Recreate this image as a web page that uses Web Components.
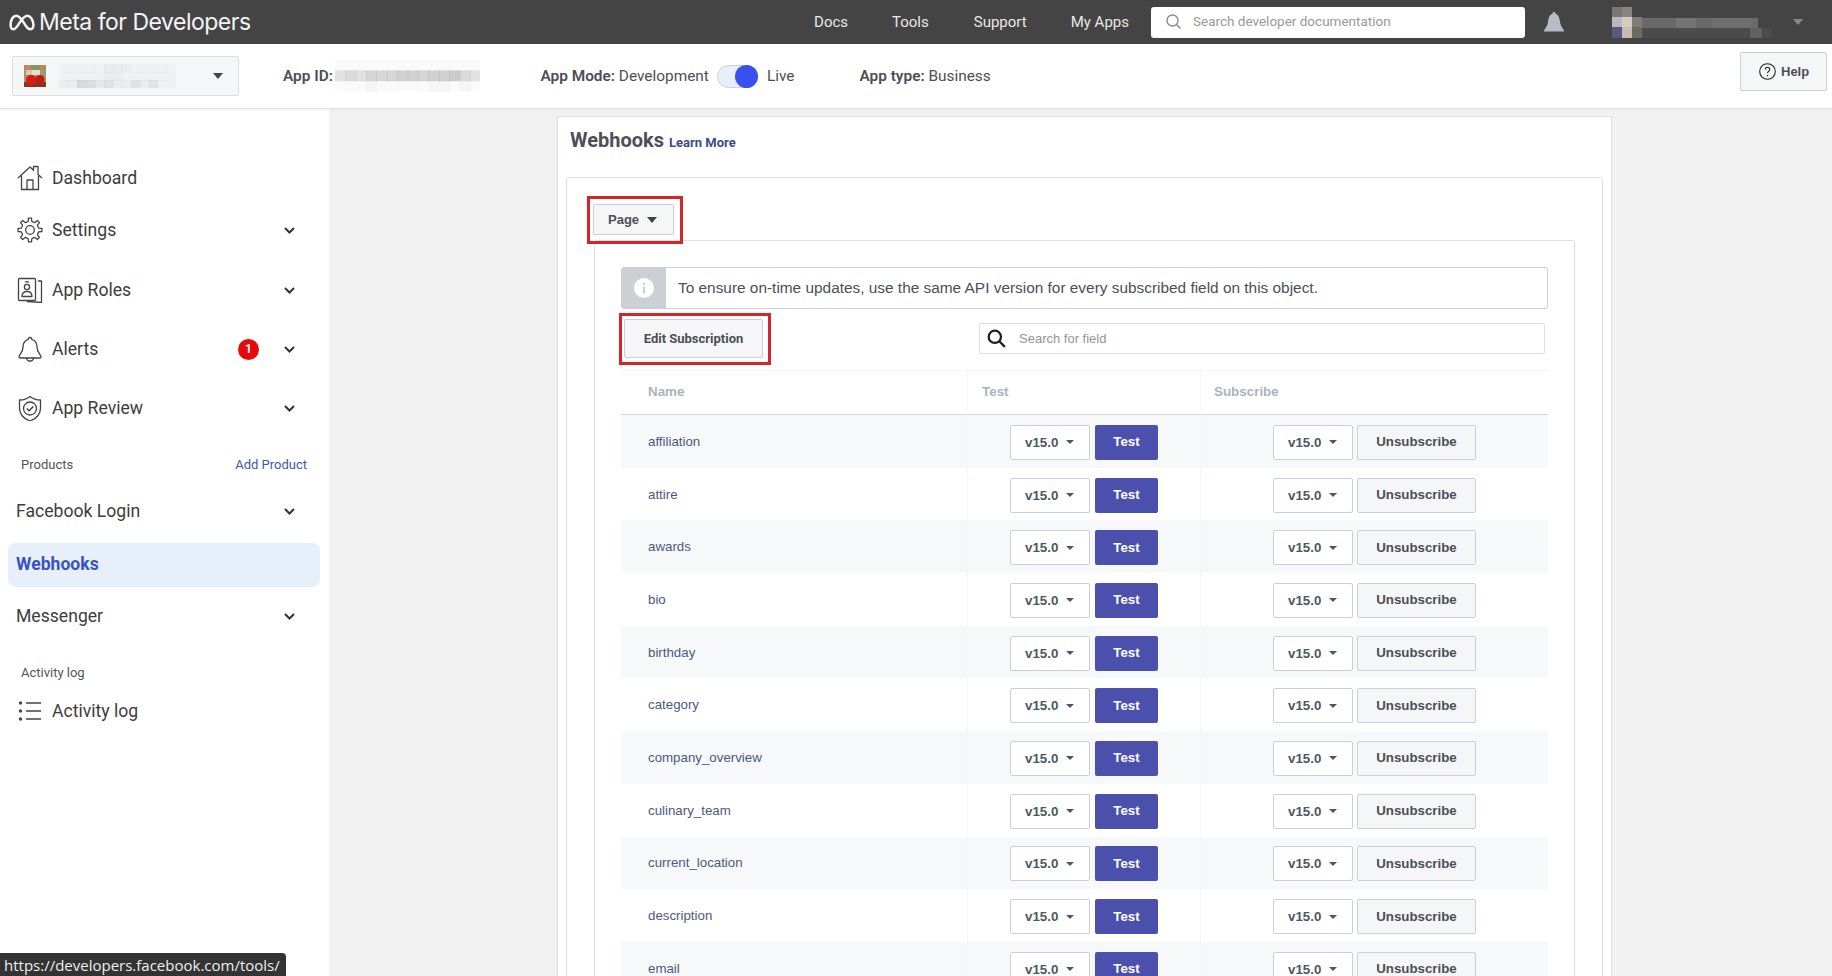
<!DOCTYPE html>
<html lang="en">
<head>
<meta charset="utf-8">
<title>Webhooks - Meta for Developers</title>
<style>
  html, body { margin: 0; height: 976px; overflow: hidden; background: #f1f1f1; }
  body { display: flex; flex-direction: column; font-family: "Roboto", sans-serif; }
  .below { display: flex; flex: 1; min-height: 0; }
</style>
</head>
<body>
<dev-topbar></dev-topbar>
<app-bar></app-bar>
<div class="below">
  <side-nav>
    <nav-item style="--h:43px" icon="home">Dashboard</nav-item>
    <nav-item style="--h:62px" icon="gear" more>Settings</nav-item>
    <nav-item style="--h:57px" icon="roles" more>App Roles</nav-item>
    <nav-item style="--h:62px" icon="bell" more badge="1">Alerts</nav-item>
    <nav-item style="--h:55px" icon="shield" more>App Review</nav-item>
    <nav-section style="--h:58px" action="Add Product">Products</nav-section>
    <nav-item style="--h:35px" more>Facebook Login</nav-item>
    <nav-item style="--h:44px; margin-top:15px" active>Webhooks</nav-item>
    <nav-item style="--h:57px" more>Messenger</nav-item>
    <nav-section style="--h:56px">Activity log</nav-section>
    <nav-item style="--h:22px" icon="list">Activity log</nav-item>
  </side-nav>
  <webhooks-page></webhooks-page>
</div>
<status-tip>https://developers.facebook.com/tools/</status-tip>

<script>
const ICONS = {
  home: `<path d="M1 13 13 2l3.500 3.200V1.500h4.500v8l4 3.500"/><path d="M4.500 10.500V24.500h17V10.500"/><path d="M10 24.500V15h6v9.500"/>`,
  roles: `<rect x="1.500" y="1.500" width="17" height="22" rx="1"/><circle cx="10" cy="10" r="2.600"/><path d="M5 19.500c0-3.500 2-5 5-5s5 1.500 5 5zM8 4.800h4"/><path d="M21 4h3.500v21.500L10 24.500"/>`,
  bell: `<path d="M13 1.500c1 0 1.800.8 1.800 2 3.500 1 5.200 4 5.200 7.500 0 6 4 7.500 4 10 0 .8-.5 1-1.200 1H3.200c-.7 0-1.200-.2-1.200-1 0-2.500 4-4 4-10 0-3.500 1.700-6.500 5.200-7.500 0-1.200.8-2 1.800-2z"/><path d="M9.500 21.500c0 2.200 1.500 3.500 3.500 3.500s3.500-1.300 3.500-3.500"/>`,
  shield: `<path d="M13 1.500c3 2.500 6 3.500 10.500 3.500v8c0 6.500-4 10.500-10.500 13-6.500-2.500-10.500-6.500-10.500-13V5c4.500 0 7.500-1 10.500-3.500z"/><circle cx="13" cy="13.500" r="6.500"/><path d="m9.800 13.500 2.300 2.300 4.200-4.300" stroke-width="1.500"/>`,
  list: `<circle cx="3.500" cy="5" r="1.700" fill="#444" stroke="none"/><circle cx="3.500" cy="13" r="1.700" fill="#444" stroke="none"/><circle cx="3.500" cy="21" r="1.700" fill="#444" stroke="none"/><path d="M9 5h15M9 13h15M9 21h15"/>`,
};

function gearIcon() {
  // eight teeth, drawn round the centre of a 26 box
  let d = "";
  const teeth = 8;
  for (let i = 0; i < teeth; i++) {
    const a = (i / teeth) * Math.PI * 2;
    const step = (Math.PI * 2) / teeth;
    const pts = [
      [8.6, a - step * 0.5],
      [8.9, a - step * 0.26],
      [12, a - step * 0.16],
      [12, a + step * 0.16],
      [8.9, a + step * 0.26],
    ];
    pts.forEach(([r, t], k) => {
      const x = (13 + r * Math.cos(t)).toFixed(2);
      const y = (13 + r * Math.sin(t)).toFixed(2);
      d += (i === 0 && k === 0 ? "M" : "L") + x + " " + y;
    });
  }
  return `<path d="${d}Z"/><circle cx="13" cy="13" r="4.300"/>`;
}

class DevTopbar extends HTMLElement {
  constructor() {
    super();
    this.attachShadow({ mode: "open" });
  }

  connectedCallback() {
    this.shadowRoot.innerHTML = `
      <style>
        :host {
          display: flex;
          align-items: center;
          flex: none;
          height: 44px;
          background: #444;
          color: #e8e8e8;
          font: 15px "Roboto", sans-serif;
        }
        .logo {
          display: flex;
          align-items: center;
          margin-left: 8px;
          color: #f4f4f4;
        }
        .logo svg { display: block; margin-right: 4px; }
        .logo span {
          font: 400 23px "Inter", sans-serif;
          letter-spacing: -0.5px;
          white-space: nowrap;
        }
        nav {
          display: flex;
          margin-left: auto;
          gap: 0;
        }
        nav a { color: inherit; text-decoration: none; white-space: nowrap; }
        .search {
          display: flex;
          align-items: center;
          box-sizing: border-box;
          width: 374px;
          height: 31px;
          margin-left: 22px;
          padding: 0 0 2px 15px;
          background: #fff;
          border-radius: 3px;
          color: #999;
          font-size: 13.5px;
        }
        .search svg { margin-right: 12px; }
        .bell { margin-left: 19px; display: block; }
        .user { margin-left: 48px; display: block; }
        .caret {
          width: 0;
          height: 0;
          margin: 0 29px 0 20px;
          border: 5px solid transparent;
          border-top: 6px solid #8a8a8a;
          border-bottom: 0;
        }
      </style>
      <div class="logo">
        <svg width="27" height="19" viewBox="0 0 26 16" fill="none" stroke="#f4f4f4" stroke-width="2.400">
          <path d="M2.500 10.500C2.500 5 5 1.500 8 1.500c3.500 0 6.500 5.500 9 9.500 1.500 2.500 3 3.500 4.500 3.500 2 0 3-2 3-4 0-5-3-9-6-9-3.500 0-7 6-9.500 10-1.500 2.200-2.500 3-4 3-1.500 0-2.500-1.500-2.500-4z"/>
        </svg>
        <span>Meta for Developers</span>
      </div>
      <nav>
        <a href="#" style="margin-right:44px">Docs</a>
        <a href="#" style="margin-right:45px">Tools</a>
        <a href="#" style="margin-right:44px">Support</a>
        <a href="#">My Apps</a>
      </nav>
      <div class="search">
        <svg width="15" height="15" viewBox="0 0 15 15" fill="none" stroke="#8a8a8a" stroke-width="1.400">
          <circle cx="6.500" cy="6.500" r="5.500"/><path d="m10.500 10.500 4 4"/>
        </svg>
        <span>Search developer documentation</span>
      </div>
      <svg class="bell" width="20" height="20" viewBox="0 0 20 20" fill="#b9bcc6">
        <path d="M10 0c1 0 1.500.7 1.500 1.700C15 3 15.500 6.500 16 10c.4 3 2 5.500 4 8.500.2.500 0 1-.7 1H.7c-.7 0-.9-.5-.7-1C2 15.500 3.600 13 4 10c.5-3.500 1-7 4.500-8.300C8.500.7 9 0 10 0z"/>
      </svg>
      <svg class="user" width="161" height="31" viewBox="0 0 161 31" style="margin-left:48px">
        <g style="filter:blur(.4px)">
          <rect width="10" height="10" x="0" y="0" fill="#7a7672"/>
          <rect width="10" height="10" x="10" y="0" fill="#8a8580"/>
          <rect width="10" height="10" x="0" y="10" fill="#bab6c2"/>
          <rect width="10" height="10" x="10" y="10" fill="#d6cac2"/>
          <rect width="10" height="10" x="20" y="10" fill="#827c76"/>
          <rect width="10" height="11" x="0" y="20" fill="#5a5a80"/>
          <rect width="10" height="11" x="10" y="20" fill="#c8bcb0"/>
          <rect width="10" height="11" x="20" y="20" fill="#6e6a62"/>
          <rect width="116" height="10" x="30" y="11" fill="#696969"/>
          <rect width="20" height="10" x="64" y="11" fill="#747474"/>
          <rect width="40" height="10" x="100" y="11" fill="#6f6f6f"/>
          <rect width="130" height="10" x="30" y="21" fill="#4b4b4b"/>
          <rect width="12" height="10" x="138" y="21" fill="#606060"/>
        </g>
      </svg>
      <div class="caret"></div>
    `;
  }
}

class BlurStrip extends HTMLElement {
  constructor() {
    super();
    this.attachShadow({ mode: "open" });
  }

  connectedCallback() {
    const rows = (this.getAttribute("rows") || "").split("|");
    const w = Number(this.getAttribute("cell-w") || 10);
    const h = Number(this.getAttribute("cell-h") || 10);
    const cols = Math.max(...rows.map((r) => r.length));
    let rects = "";
    rows.forEach((row, y) => {
      [...row].forEach((c, x) => {
        const o = parseInt(c, 16) / 40;
        rects += `<rect x="${x * w}" y="${y * h}" width="${w + 0.4}" height="${h + 0.4}" fill-opacity="${o}"/>`;
      });
    });
    this.shadowRoot.innerHTML = `
      <style>
        :host { display: block; flex: none; }
        svg { display: block; }
      </style>
      <svg width="${cols * w}" height="${rows.length * h}" fill="#333">${rects}</svg>
    `;
  }
}

class AppBar extends HTMLElement {
  constructor() {
    super();
    this.attachShadow({ mode: "open" });
  }

  connectedCallback() {
    this.shadowRoot.innerHTML = `
      <style>
        :host {
          position: relative;
          z-index: 2;
          display: flex;
          align-items: center;
          flex: none;
          box-sizing: border-box;
          height: 65px;
          padding-left: 12px;
          background: #fff;
          border-bottom: 1px solid #e2e2e2;
          box-shadow: 0 1px 2px rgba(0, 0, 0, 0.05);
          color: #4b4f56;
          font: 15.400px "Roboto", sans-serif;
          white-space: nowrap;
        }
        .picker {
          display: flex;
          align-items: center;
          box-sizing: border-box;
          width: 227px;
          height: 40px;
          padding-left: 11px;
          background: #f5f6f7;
          border: 1px solid #dddfe2;
          border-radius: 2px;
        }
        .picker svg { display: block; margin-right: 4px; }
        .caret {
          width: 0;
          height: 0;
          margin-left: auto;
          margin-right: 15px;
          border: 5px solid transparent;
          border-top: 6px solid #3f4248;
          border-bottom: 0;
        }
        b { font-weight: 600; }
        .id { display: flex; align-items: center; margin-left: 44px; }
        .id b { margin-right: 2px; }
        .mode { margin-left: 60px; }
        .toggle {
          position: relative;
          box-sizing: border-box;
          width: 41px;
          height: 23px;
          margin: 0 9px 0 8px;
          background: #e7effb;
          border: 1px solid #ccd0d5;
          border-radius: 12px;
        }
        .toggle::after {
          content: "";
          position: absolute;
          top: -1px;
          right: -1px;
          width: 23px;
          height: 23px;
          background: #3a50ee;
          border-radius: 50%;
        }
        .type { margin-left: 65px; }
        .help {
          display: flex;
          align-items: center;
          box-sizing: border-box;
          width: 87px;
          height: 39px;
          margin: -10px 5px 0 auto;
          padding-left: 18px;
          background: #f5f6f7;
          border: 1px solid #ccd0d5;
          border-radius: 2px;
          font: bold 13px "Liberation Sans", sans-serif;
        }
        .help svg { margin-right: 5px; }
      </style>
      <div class="picker">
        <svg width="22" height="22" viewBox="0 0 22 22">
          <rect width="22" height="22" fill="#a89868"/>
          <rect x="0" y="0" width="7" height="5" fill="#c08a6a"/>
          <rect x="7" y="0" width="8" height="5" fill="#7f9a5e"/>
          <rect x="15" y="0" width="7" height="5" fill="#b58a5a"/>
          <rect x="2" y="5" width="6" height="5" fill="#d8ccae"/>
          <rect x="8" y="5" width="8" height="5" fill="#e6dfc8"/>
          <rect x="16" y="5" width="6" height="6" fill="#90a070"/>
          <rect x="0" y="17" width="22" height="5" fill="#7a3a24"/>
          <circle cx="7" cy="15" r="5.200" fill="#d81e14"/>
          <circle cx="16" cy="14.500" r="4.600" fill="#c81a14"/>
        </svg>
        <blur-strip cell-w="9" cell-h="8" rows="01111122211111|01111122111111|02265342242411"></blur-strip>
        <div class="caret"></div>
      </div>
      <div class="id">
        <b>App ID:</b>
        <blur-strip cell-w="10.400" cell-h="10.400" rows="11111111111111|67688899899a76|11121111122121"></blur-strip>
      </div>
      <div class="mode"><b>App Mode:</b> Development</div>
      <div class="toggle"></div>
      <div>Live</div>
      <div class="type"><b>App type:</b> Business</div>
      <div class="help">
        <svg width="17" height="17" viewBox="0 0 17 17" fill="none" stroke="#222" stroke-width="1.100">
          <circle cx="8.500" cy="8.500" r="7.800"/>
          <path d="M6.300 6.500c0-1.400 1-2.300 2.200-2.300s2.200.9 2.200 2.200c0 1.800-2.200 2-2.200 3.800M8.500 12v1.200"/>
        </svg>
        Help
      </div>
    `;
  }
}

class SideNav extends HTMLElement {
  constructor() {
    super();
    this.attachShadow({ mode: "open" });
  }

  connectedCallback() {
    this.shadowRoot.innerHTML = `
      <style>
        :host {
          display: block;
          flex: none;
          box-sizing: border-box;
          width: 329px;
          padding-top: 47px;
          background: #fff;
        }
      </style>
      <slot></slot>
    `;
  }
}

class NavItem extends HTMLElement {
  constructor() {
    super();
    this.attachShadow({ mode: "open" });
  }

  connectedCallback() {
    const icon = this.getAttribute("icon");
    const badge = this.getAttribute("badge");
    const more = this.hasAttribute("more");
    const iconMarkup = icon === "gear" ? gearIcon() : ICONS[icon];
    this.shadowRoot.innerHTML = `
      <style>
        :host {
          display: flex;
          align-items: center;
          box-sizing: border-box;
          height: var(--h, 44px);
          padding: 0 34px 0 16px;
          color: #3c3c3c;
          font: 17.600px "Roboto", sans-serif;
          white-space: nowrap;
        }
        :host([active]) {
          margin-left: 8px;
          margin-right: 9px;
          padding-left: 8px;
          padding-bottom: 3px;
          background: #e7effb;
          border-radius: 8px;
          color: #3a52c4;
          font-weight: 700;
        }
        .icon { display: block; flex: none; margin-right: 9px; margin-left: 1px; }
        .badge {
          display: flex;
          align-items: center;
          justify-content: center;
          width: 21px;
          height: 21px;
          margin-left: auto;
          background: #e60a0a;
          border-radius: 50%;
          color: #fff;
          font-size: 12px;
          font-weight: 700;
        }
        .chevron { display: block; margin-left: auto; margin-top: 1px; }
        .badge + .chevron { margin-left: 25px; }
      </style>
      ${icon ? `<svg class="icon" width="26" height="26" viewBox="0 0 26 26" fill="none" stroke="#444" stroke-width="1.300" stroke-linejoin="round">${iconMarkup}</svg>` : ""}
      <slot></slot>
      ${badge ? `<span class="badge">${badge}</span>` : ""}
      ${more ? `<svg class="chevron" width="11" height="7" viewBox="0 0 11 7" fill="none" stroke="#333" stroke-width="2"><path d="m1 1 4.500 4.500L10 1"/></svg>` : ""}
    `;
  }
}

class NavSection extends HTMLElement {
  constructor() {
    super();
    this.attachShadow({ mode: "open" });
  }

  connectedCallback() {
    const action = this.getAttribute("action");
    this.shadowRoot.innerHTML = `
      <style>
        :host {
          display: flex;
          align-items: center;
          justify-content: space-between;
          box-sizing: border-box;
          height: var(--h, 44px);
          padding: 0 22px 0 21px;
          color: #555;
          font: 13px "Roboto", sans-serif;
        }
        a { color: #3b5aa8; text-decoration: none; }
      </style>
      <slot></slot>
      ${action ? `<a href="#">${action}</a>` : ""}
    `;
  }
}

class FieldRow extends HTMLElement {
  constructor() {
    super();
    this.attachShadow({ mode: "open" });
  }

  connectedCallback() {
    this.shadowRoot.innerHTML = `
      <style>
        :host {
          display: grid;
          grid-template-columns: 346px 233px 348px;
          height: 52.7px;
          font: 13.300px "Liberation Sans", sans-serif;
        }
        :host([striped]) { background: #f7f8f9; }
        .cell { display: flex; align-items: center; padding-top: 2px; }
        .name { padding-left: 27px; padding-top: 0; color: #4b5a80; }
        .test { padding-left: 42px; gap: 5px; border-left: 1px solid #f4f5f6; }
        .sub { padding-left: 72px; gap: 4px; border-left: 1px solid #f4f5f6; }
        .version, .btn {
          display: flex;
          align-items: center;
          box-sizing: border-box;
          height: 35px;
          border-radius: 2px;
          font-weight: 700;
        }
        .version {
          width: 80px;
          padding-left: 14px;
          background: #fff;
          border: 1px solid #ccd0d5;
          color: #4a5866;
        }
        .version i {
          width: 0;
          height: 0;
          margin-left: 8px;
          border: 4px solid transparent;
          border-top: 4px solid #4a5866;
          border-bottom: 0;
        }
        .btn { justify-content: center; padding-bottom: 1px; }
        .run { width: 63px; background: #4b50ad; color: #fff; }
        .off {
          width: 119px;
          background: #f5f6f7;
          border: 1px solid #ccd0d5;
          color: #4b4f56;
        }
      </style>
      <div class="cell name">${this.getAttribute("name")}</div>
      <div class="cell test">
        <div class="version">v15.0<i></i></div>
        <div class="btn run">Test</div>
      </div>
      <div class="cell sub">
        <div class="version">v15.0<i></i></div>
        <div class="btn off">Unsubscribe</div>
      </div>
    `;
  }
}

class WebhooksPage extends HTMLElement {
  constructor() {
    super();
    this.attachShadow({ mode: "open" });
  }

  connectedCallback() {
    const fields = [
      "affiliation", "attire", "awards", "bio", "birthday", "category",
      "company_overview", "culinary_team", "current_location", "description", "email",
    ];
    const rows = fields
      .map((f, i) => `<field-row name="${f}"${i % 2 === 0 ? " striped" : ""}></field-row>`)
      .join("");
    this.shadowRoot.innerHTML = `
      <style>
        :host {
          display: block;
          flex: 1;
          min-width: 0;
          overflow: hidden;
          padding: 7px 0 0 228px;
          color: #4b4f56;
          font: 13px "Liberation Sans", sans-serif;
        }
        .card {
          box-sizing: border-box;
          width: 1055px;
          background: #fff;
          border: 1px solid #dddfe2;
          padding: 0 8px;
        }
        .head {
          display: flex;
          align-items: baseline;
          height: 60px;
          padding: 11px 0 0 4px;
          box-sizing: border-box;
        }
        h1 {
          margin: 0 5px 0 0;
          font: 700 20px "Roboto", sans-serif;
          color: #4b4f56;
        }
        .head a {
          color: #3e4a8e;
          font: 700 13px "Roboto", sans-serif;
          text-decoration: none;
        }
        .tabs {
          box-sizing: border-box;
          height: 900px;
          padding: 18px 0 0 20px;
          border: 1px solid #dddfe2;
          border-radius: 3px 3px 0 0;
        }
        .mark {
          position: relative;
          z-index: 1;
          box-sizing: border-box;
          border: 3px solid #d5242c;
          width: fit-content;
        }
        .ghost {
          display: flex;
          align-items: center;
          box-sizing: border-box;
          background: #f5f6f7;
          border: 1px solid #ccd0d5;
          border-radius: 2px;
          font-weight: 700;
          color: #4b4f56;
        }
        .page { width: 81px; height: 31px; padding-left: 14px; }
        .page i {
          width: 0;
          height: 0;
          margin-left: 8px;
          border: 5px solid transparent;
          border-top: 6px solid #3f4248;
          border-bottom: 0;
        }
        .inner {
          box-sizing: border-box;
          width: 981px;
          height: 800px;
          margin: -4px 0 0 7px;
          padding: 26px;
          border: 1px solid #dddfe2;
          border-radius: 3px 3px 0 0;
        }
        .notice {
          display: flex;
          align-items: center;
          box-sizing: border-box;
          height: 42px;
          border: 1px solid #ccd0d5;
          border-radius: 3px;
          font-size: 15.400px;
        }
        .notice .tip {
          display: flex;
          align-items: center;
          justify-content: center;
          align-self: stretch;
          width: 44px;
          margin-right: 12px;
          background: #ccd0d5;
        }
        .notice span { padding-bottom: 1px; }
        .actions {
          display: flex;
          align-items: center;
          justify-content: space-between;
          height: 52px;
          margin: 4px 3px 0 -2px;
        }
        .actions .mark { padding: 3px 5px 4px 2px; height: 52px; width: 152px; }
        .edit {
          justify-content: center;
          width: 139px;
          height: 39px;
          font: 700 13px "Roboto", sans-serif;
        }
        .find {
          display: flex;
          align-items: center;
          box-sizing: border-box;
          width: 566px;
          height: 31px;
          margin-top: -2px;
          padding-left: 7px;
          border: 1px solid #dddfe2;
          border-radius: 2px;
          color: #90949c;
        }
        .find svg { margin-right: 13px; }
        .table { margin-top: 5px; }
        .cols {
          display: grid;
          grid-template-columns: 346px 233px 348px;
          box-sizing: border-box;
          height: 45px;
          padding-bottom: 2px;
          border-top: 1px solid #f5f6f7;
          border-bottom: 1px solid #d3d7dc;
          color: #a9b4be;
          font-size: 13.400px;
          font-weight: 700;
        }
        .cols div { display: flex; align-items: center; }
        .cols div:first-child { padding-left: 27px; }
        .cols div + div { padding-left: 14px; border-left: 1px solid #f4f5f6; }
        .cols div:last-child { padding-left: 13px; }
      </style>
      <div class="card">
        <div class="head"><h1>Webhooks</h1><a href="#">Learn More</a></div>
        <div class="tabs">
          <div class="mark" style="padding:5px 5px 5px 3px;width:96px;height:48px">
            <div class="ghost page">Page<i></i></div>
          </div>
          <div class="inner">
            <div class="notice">
              <div class="tip">
                <svg width="20" height="20" viewBox="0 0 20 20">
                  <circle cx="10" cy="10" r="10" fill="#fff"/>
                  <rect x="9" y="8.500" width="2.200" height="7" fill="#ccd0d5"/>
                  <circle cx="10.100" cy="5.800" r="1.300" fill="#ccd0d5"/>
                </svg>
              </div>
              <span>To ensure on-time updates, use the same API version for every subscribed field on this object.</span>
            </div>
            <div class="actions">
              <div class="mark"><div class="ghost edit">Edit Subscription</div></div>
              <div class="find">
                <svg width="19" height="19" viewBox="0 0 17 17" fill="none" stroke="#1c1e21" stroke-width="2">
                  <circle cx="7" cy="7" r="5.500"/><path d="m11 11 5 5"/>
                </svg>
                Search for field
              </div>
            </div>
            <div class="table">
              <div class="cols"><div>Name</div><div>Test</div><div>Subscribe</div></div>
              ${rows}
            </div>
          </div>
        </div>
      </div>
    `;
  }
}

class StatusTip extends HTMLElement {
  constructor() {
    super();
    this.attachShadow({ mode: "open" });
  }

  connectedCallback() {
    this.shadowRoot.innerHTML = `
      <style>
        :host {
          position: fixed;
          left: 0;
          bottom: 0;
          z-index: 5;
          box-sizing: border-box;
          height: 23px;
          padding: 2px 6px 0 4px;
          background: #333;
          border-top-right-radius: 4px;
          color: #eee;
          font: 15px/20px "Open Sans", sans-serif;
          white-space: nowrap;
        }
      </style>
      <slot></slot>
    `;
  }
}

customElements.define("dev-topbar", DevTopbar);
customElements.define("blur-strip", BlurStrip);
customElements.define("app-bar", AppBar);
customElements.define("side-nav", SideNav);
customElements.define("nav-item", NavItem);
customElements.define("nav-section", NavSection);
customElements.define("field-row", FieldRow);
customElements.define("webhooks-page", WebhooksPage);
customElements.define("status-tip", StatusTip);
</script>
</body>
</html>
